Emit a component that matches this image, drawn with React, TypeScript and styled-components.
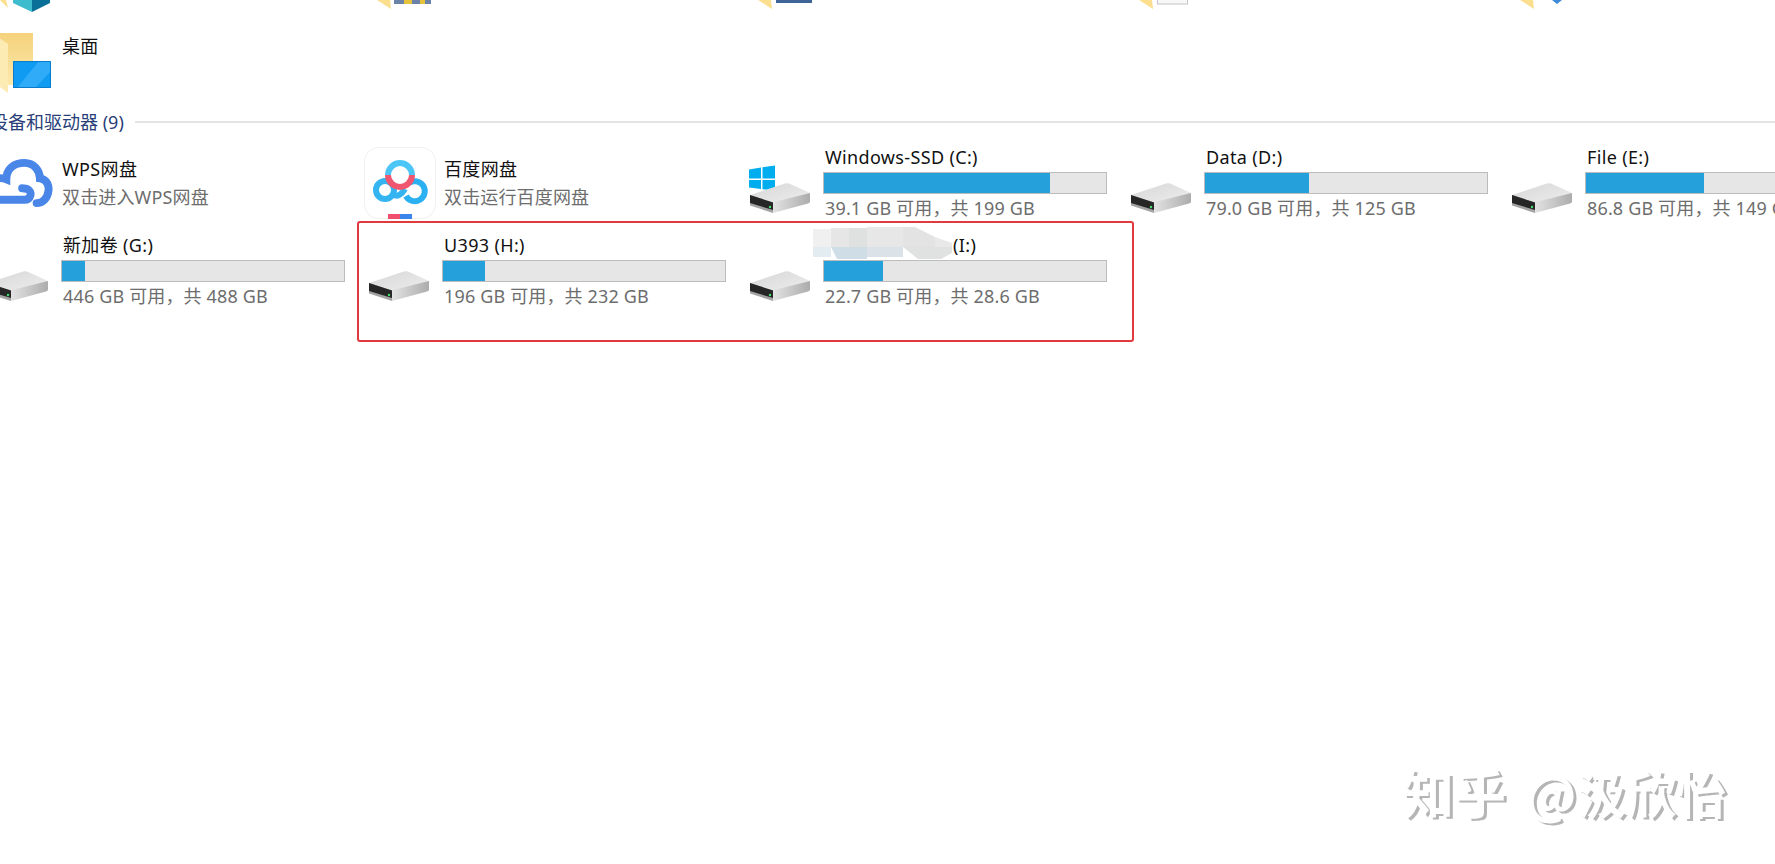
import * as React from "react";
import styled, { createGlobalStyle } from "styled-components";

type Drive = {
  name: string;
  free: number;
  total: number;
  unit: string;
  usedPercent: number;
  system?: boolean;
  redacted?: boolean;
};

const rowOneDrives: Drive[] = [
  { name: "Windows-SSD (C:)", free: 39.1, total: 199, unit: "GB", usedPercent: 80.2, system: true },
  { name: "Data (D:)", free: 79.0, total: 125, unit: "GB", usedPercent: 36.8 },
  { name: "File (E:)", free: 86.8, total: 149, unit: "GB", usedPercent: 42 },
];

const rowTwoDrives: Drive[] = [
  { name: "新加卷 (G:)", free: 446, total: 488, unit: "GB", usedPercent: 8 },
  { name: "U393 (H:)", free: 196, total: 232, unit: "GB", usedPercent: 15 },
  { name: "(I:)", free: 22.7, total: 28.6, unit: "GB", usedPercent: 21, redacted: true },
];

const formatSize = (value: number) => {
  return value < 100 ? value.toFixed(1) : String(value);
};

const DriveIcon: React.FC<{ system?: boolean }> = ({ system }) => (
  <svg width="62" height={system ? 48 : 31} viewBox={system ? "0 -17 62 48" : "0 0 62 31"}>
    <defs>
      <linearGradient id="driveTop" x1="0" y1="0" x2="1" y2="1">
        <stop offset="0" stopColor="#d6d6d6" />
        <stop offset="1" stopColor="#eeeeee" />
      </linearGradient>
      <linearGradient id="driveSide" x1="0" y1="0" x2="1" y2="0">
        <stop offset="0" stopColor="#e4e4e4" />
        <stop offset="1" stopColor="#acacac" />
      </linearGradient>
    </defs>
    {system && (
      <g fill="#00adef">
        <path d="M0 -12.5 L12 -14.5 V-3.5 H0 Z" />
        <path d="M13.5 -14.8 L26 -16.5 V-3.5 H13.5 Z" />
        <path d="M0 -2 H12 V7 L0 5.5 Z" />
        <path d="M13.5 -2 H26 V8.5 L13.5 7.2 Z" />
      </g>
    )}
    <path d="M1 13 L36 1.5 Q38 0.8 40 1.5 L60 10.5 L61 12 L23 21 L1 13 Z" fill="url(#driveTop)" />
    <path d="M23 20.5 L61 11 V19.5 Q61 21 59 21.6 L24 31 Z" fill="url(#driveSide)" />
    <path d="M1 13 L24 20.5 V31 L1 23.5 Z" fill="#a3a3a3" />
    <path d="M1 13 L24 20.5 V28 L1 21 Z" fill="#262626" />
    <circle cx="21" cy="25" r="1.2" fill="#3fe070" />
  </svg>
);

const CloudIcon = () => (
  <svg width="85" height="50" viewBox="0 0 85 50">
    <g transform="translate(23 -8) scale(0.3333)" fill="none" stroke="#4a86e8" strokeWidth="24" strokeLinecap="round">
      <path d="M-30 115 C-30 90 -5 78 20 88 C20 55 45 38 75 38 C105 38 122 62 122 85 C145 88 150 110 148 122 C146 145 130 160 112 160" />
      <path d="M-30 150 H75 C95 150 100 125 85 118 C80 115 75 115 68 115" />
    </g>
  </svg>
);

const BaiduIcon = () => (
  <svg width="72" height="72" viewBox="0 0 72 72">
    <rect x="0.5" y="0.5" width="71" height="71" rx="14" fill="#fff" stroke="#f0f0f0" />
    <circle cx="21" cy="43" r="9" fill="none" stroke="#35b4f2" strokeWidth="6" />
    <path d="M29 47 C33 51 38 47 41 42" fill="none" stroke="#35b4f2" strokeWidth="6" />
    <path d="M45 36 A10 10 0 1 1 42 49" fill="none" stroke="#2bb0f2" strokeWidth="6" />
    <path d="M24 28 A12 12 0 0 1 48 28" fill="none" stroke="#4cc6f6" strokeWidth="6" />
    <path d="M24 28 A12 12 0 0 0 48 28" fill="none" stroke="#f0566f" strokeWidth="6" />
    <rect x="24" y="67" width="12" height="5" fill="#f0506e" />
    <rect x="36" y="67" width="12" height="5" fill="#3b86ec" />
  </svg>
);

const DesktopFolderIcon = () => (
  <svg width="85" height="60" viewBox="0 0 85 60">
    <defs>
      <linearGradient id="folderBack" x1="0" y1="0" x2="0" y2="1">
        <stop offset="0" stopColor="#f5d27c" />
        <stop offset="1" stopColor="#fde9ac" />
      </linearGradient>
    </defs>
    <rect x="18" y="0" width="38" height="52" fill="url(#folderBack)" />
    <path d="M15 0 L31 11 V60 L15 48 Z" fill="#fdebb4" />
    <rect x="36" y="28" width="38" height="27" fill="#0f9bf2" />
    <path d="M40 55 L62 28 H74 V38 L58 55 Z" fill="#2fabf8" />
    <path d="M36.5 28.5 H73.5 V54.5 H36.5 Z" fill="none" stroke="#0b7cc9" />
  </svg>
);

const TopRowIcon: React.FC<{ index: number }> = ({ index }) => (
  <svg width="85" height="12" viewBox="0 0 85 12">
    {index === 0 && (
      <>
        <path d="M23 0 H29 L31 8 Z" fill="#fbdf8e" />
        <path d="M36 0 H55 V12 L36 3 Z" fill="#3cbccd" />
        <path d="M55 12 V0 H73 V3 Z" fill="#0b7098" />
      </>
    )}
    {index === 1 && (
      <>
        <path d="M19 0 H32 L33 9 Z" fill="#fbdf8e" />
        <rect x="36" y="0" width="37" height="4" fill="#6c83a8" />
        <rect x="46" y="0" width="8" height="4" fill="#e6c23c" />
        <rect x="62" y="0" width="5" height="4" fill="#e6c23c" />
      </>
    )}
    {index === 2 && (
      <>
        <path d="M19 0 H32 L33 9 Z" fill="#fbdf8e" />
        <rect x="37" y="0" width="36" height="3" fill="#3f6496" />
      </>
    )}
    {index === 3 && (
      <>
        <path d="M19 0 H32 L33 9 Z" fill="#fbdf8e" />
        <rect x="37.5" y="-1" width="30" height="5" fill="#f8f8f8" stroke="#c4c4c4" />
      </>
    )}
    {index === 4 && (
      <>
        <path d="M19 0 H32 L33 9 Z" fill="#fbdf8e" />
        <path d="M51 0 H61 L56 4 Z" fill="#3f8ad8" />
      </>
    )}
  </svg>
);

const RedactionSmear = () => (
  <svg width="139" height="32" viewBox="0 0 139 32">
    <defs>
      <filter id="smearBlur">
        <feGaussianBlur stdDeviation="0.7" />
      </filter>
    </defs>
    <g filter="url(#smearBlur)">
      <rect x="0" y="2" width="18" height="18" fill="#f0f0f0" />
      <rect x="18" y="1" width="18" height="19" fill="#e6e6e6" />
      <rect x="36" y="1" width="18" height="19" fill="#dfe1e1" />
      <rect x="54" y="0" width="36" height="20" fill="#e6e7e6" />
      <path d="M90 0 H102 L122 10 V20 H90 Z" fill="#e2e3e2" />
      <path d="M122 10 L139 16 V20 H122 Z" fill="#e8e8e8" />
      <rect x="0" y="20" width="18" height="10" fill="#e3ecf1" />
      <path d="M18 20 H54 V32 H24 Z" fill="#cfdde6" />
      <path d="M54 20 H90 V30 H54 Z" fill="#dbe3e8" />
      <path d="M90 20 H139 V26 L128 32 H105 Z" fill="#e0e2e2" />
    </g>
  </svg>
);

const DriveTile: React.FC<{ drive: Drive }> = ({ drive }) => (
  <Tile>
    <IconSlot $left={10} $height={67}>
      <DriveIcon system={drive.system} />
    </IconSlot>
    <TileBody>
      <Name $indent={drive.redacted ? 130 : 2}>{drive.name}</Name>
      {drive.redacted && (
        <Smear>
          <RedactionSmear />
        </Smear>
      )}
      <Bar>
        <BarFill style={{ width: `${drive.usedPercent}%` }} />
      </Bar>
      <Detail $indent={2} $top={3}>
        {formatSize(drive.free)} {drive.unit} 可用，共 {formatSize(drive.total)} {drive.unit}
      </Detail>
    </TileBody>
  </Tile>
);

const App: React.FC = () => {
  return (
    <>
      <GlobalStyle />
      <Page>
        <TopRow>
          {[0, 1, 2, 3, 4].map((index) => (
            <TopRowIcon key={index} index={index} />
          ))}
        </TopRow>
        <DesktopRow>
          <DesktopFolderIcon />
          <Name $indent={0}>桌面</Name>
        </DesktopRow>
        <SectionHeader>
          <SectionTitle>设备和驱动器 (9)</SectionTitle>
          <SectionRule />
        </SectionHeader>
        <TileGrid>
          <Tile>
            <IconSlot $left={0} $height={62}>
              <CloudIcon />
            </IconSlot>
            <AppBody>
              <Name $indent={1}>WPS网盘</Name>
              <Detail $indent={1} $top={6}>双击进入WPS网盘</Detail>
            </AppBody>
          </Tile>
          <Tile>
            <BaiduSlot>
              <BaiduIcon />
            </BaiduSlot>
            <AppBody>
              <Name $indent={2}>百度网盘</Name>
              <Detail $indent={2} $top={6}>双击运行百度网盘</Detail>
            </AppBody>
          </Tile>
          {rowOneDrives.map((drive) => (
            <DriveTile key={drive.name} drive={drive} />
          ))}
          {rowTwoDrives.map((drive) => (
            <DriveTile key={drive.name} drive={drive} />
          ))}
        </TileGrid>
        <Highlight />
        <Watermark>
          <span>知乎</span>
          <WatermarkHandle>@汲欣怡</WatermarkHandle>
        </Watermark>
      </Page>
    </>
  );
};

export default App;

const GlobalStyle = createGlobalStyle`
  html, body {
    margin: 0;
    padding: 0;
    background: #fff;
  }
`;

const FONT = `"Noto Sans", "Noto Sans CJK SC", sans-serif`;

const Page = styled.div`
  position: relative;
  width: 1775px;
  height: 864px;
  overflow: hidden;
  background: #fff;
  font-family: ${FONT};
  font-size: 18px;
`;

const TopRow = styled.div`
  display: grid;
  grid-template-columns: repeat(5, 381px);
  height: 12px;
  margin-left: -23px;
  svg {
    display: block;
  }
`;

const DesktopRow = styled.div`
  display: flex;
  align-items: flex-start;
  height: 60px;
  margin: 21px 0 17px -23px;
  > div {
    margin-top: 2px;
  }
  svg {
    flex: none;
  }
`;

const SectionHeader = styled.div`
  display: flex;
  align-items: center;
  height: 24px;
  margin: 0 0 12px -10px;
`;

const SectionTitle = styled.div`
  color: #2a3f7a;
  line-height: 24px;
  white-space: nowrap;
`;

const SectionRule = styled.div`
  flex: 1;
  height: 2px;
  margin-left: 11px;
  background: #e3e3e3;
`;

const TileGrid = styled.div`
  display: grid;
  grid-template-columns: repeat(5, 381px);
  grid-auto-rows: 88px;
  margin-left: -23px;
`;

const Tile = styled.div`
  position: relative;
  display: flex;
`;

const IconSlot = styled.div<{ $left: number; $height: number }>`
  display: flex;
  flex: none;
  align-items: flex-end;
  width: 84px;
  height: ${(p) => p.$height}px;
  padding-left: ${(p) => p.$left}px;
  box-sizing: border-box;
  svg {
    display: block;
  }
`;

const BaiduSlot = styled.div`
  flex: none;
  width: 84px;
  padding: 1px 0 0 6px;
  box-sizing: border-box;
  svg {
    display: block;
  }
`;

const TileBody = styled.div`
  position: relative;
  width: 284px;
`;

const AppBody = styled.div`
  padding-top: 12px;
`;

const Name = styled.div<{ $indent: number }>`
  padding-left: ${(p) => p.$indent}px;
  color: #111;
  line-height: 22px;
  height: 22px;
  margin-bottom: 4px;
  letter-spacing: 0.35px;
  white-space: nowrap;
`;

const Smear = styled.div`
  position: absolute;
  top: -7px;
  left: -10px;
  svg {
    display: block;
  }
`;

const Bar = styled.div`
  height: 20px;
  border: 1px solid #bcbcbc;
  background: #e6e6e6;
`;

const BarFill = styled.div`
  height: 100%;
  background: #26a0da;
`;

const Detail = styled.div<{ $indent: number; $top: number }>`
  margin-top: ${(p) => p.$top}px;
  padding-left: ${(p) => p.$indent}px;
  color: #6d6d6d;
  line-height: 22px;
  letter-spacing: 0.15px;
  white-space: nowrap;
`;

const Highlight = styled.div`
  position: absolute;
  left: 357px;
  top: 221px;
  width: 773px;
  height: 117px;
  border: 2px solid #e0393e;
  border-radius: 3px;
`;

const Watermark = styled.div`
  position: absolute;
  left: 1402px;
  top: 760px;
  display: flex;
  align-items: center;
  gap: 20px;
  font-family: "Noto Sans CJK SC", sans-serif;
  font-size: 52px;
  font-weight: 700;
  line-height: 64px;
  color: #fff;
  text-shadow: 3px 2px 0 #b5b5b5;
  white-space: nowrap;
`;

const WatermarkHandle = styled.span`
  font-size: 50px;
`;
